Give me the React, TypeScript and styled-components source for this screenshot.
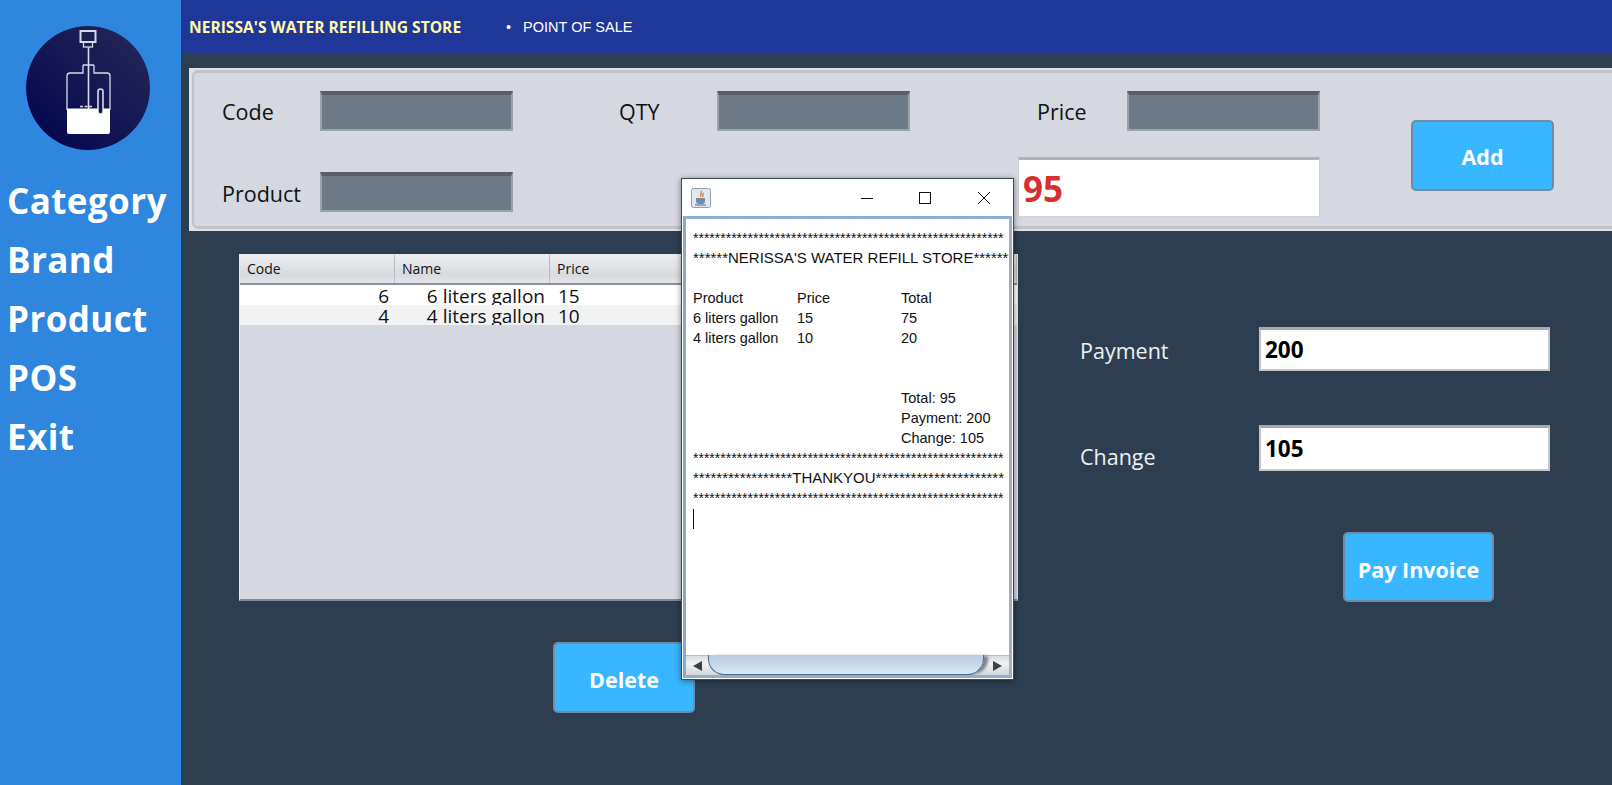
import React from "react";
import styled, { createGlobalStyle } from "styled-components";

const GlobalStyle = createGlobalStyle`
  html, body {
    margin: 0;
    padding: 0;
    height: 100%;
    overflow: hidden;
  }
  body {
    background: #2d3e50;
    font-family: "Open Sans", "Noto Sans", sans-serif;
  }
`;

const Page = styled.div`
  position: relative;
  display: flex;
  width: 1612px;
  height: 785px;
  overflow: hidden;
  background: #2d3e50;
`;

const Sidebar = styled.nav`
  width: 181px;
  flex-shrink: 0;
  background: #2e86de;
  padding: 26px 0 0 7px;
  box-sizing: border-box;
`;

const Logo = styled.svg`
  display: block;
  width: 124px;
  height: 124px;
  margin: 0 0 21px 19px;
`;

const NavItem = styled.div`
  height: 59px;
  line-height: 59px;
  color: #fff;
  font-size: 35px;
  font-weight: 700;
  letter-spacing: 0.4px;
`;

const Main = styled.div`
  flex: 1;
  min-width: 0;
`;

const TopBar = styled.header`
  height: 53px;
  display: flex;
  align-items: center;
  padding-left: 8px;
  background: #1e3799;
  color: #fff;
`;

const StoreName = styled.div`
  width: 317px;
  color: #fff8a8;
  font-size: 15.6px;
  font-weight: 700;
`;

const Crumb = styled.div`
  font-family: "Liberation Sans", Arial, sans-serif;
  font-size: 14.5px;

  &::before {
    content: "•";
    margin-right: 12px;
  }
`;

const FormFrame = styled.section`
  height: 163px;
  box-sizing: border-box;
  margin: 15px 0 0 8px;
  padding: 2px 0 2px 3px;
  background: #dfe1e5;
`;

const FormPanel = styled.div`
  display: grid;
  grid-template-columns: 98px 193px 204px 193px 217px 193px 91px 143px;
  grid-template-rows: 40px 40px;
  row-gap: 41px;
  align-items: center;
  height: 100%;
  box-sizing: border-box;
  padding: 18px 0 0 28px;
  background: #d5d8e0;
  border: 2px solid #bfc2c8;
  border-top-width: 3px;
  border-bottom-width: 3px;
  border-right: 0;
  border-radius: 6px 0 0 6px;
`;

const FieldLabel = styled.label<{ $left?: number; $drop?: number }>`
  color: #111;
  font-size: 21.5px;
  padding-left: ${({ $left }) => $left ?? 0}px;
  padding-top: ${({ $drop }) => $drop ?? 0}px;
`;

const DarkField = styled.div`
  height: 40px;
  box-sizing: border-box;
  background: #6d7a88;
  border: 2px solid #9ba2aa;
  border-top: 4px solid #565f6a;
`;

const TotalBox = styled.div`
  grid-column: 5 / 7;
  justify-self: end;
  align-self: end;
  width: 302px;
  height: 60px;
  margin-bottom: -5px;
  box-sizing: border-box;
  padding-left: 4px;
  background: #fff;
  border: 1px solid #d0d2d6;
  border-top: 3px solid #b0b2b6;
  color: #d63031;
  font-size: 35px;
  font-weight: 700;
  line-height: 58px;
`;

const BlueButton = styled.button<{ $w: number; $h: number }>`
  width: ${({ $w }) => $w}px;
  height: ${({ $h }) => $h}px;
  padding: 4px 0 0;
  background: #38b6ff;
  border: 2px solid #6f8ca3;
  border-radius: 5px;
  color: #fff;
  font-family: "Open Sans", sans-serif;
  font-size: 21.5px;
  font-weight: 700;
`;

const AddButton = styled(BlueButton)`
  grid-column: 8;
  grid-row: 1 / 3;
  margin-top: 7px;
  padding-top: 2px;
`;

const Content = styled.div`
  display: flex;
  align-items: flex-start;
  padding: 23px 0 0 58px;
`;

const LeftColumn = styled.div`
  width: 779px;
  flex-shrink: 0;
`;

const TableBox = styled.div`
  height: 347px;
  box-sizing: border-box;
  background: #d5d8e0;
  border: 1px solid #e6e8ec;
  border-bottom: 2px solid #7e8b98;
  overflow: hidden;
`;

const TableHead = styled.div`
  display: grid;
  grid-template-columns: 155px 155px 1fr;
  height: 28px;
  background: linear-gradient(#eeeff2, #d8dae0 70%, #e4e5e9);
  border-bottom: 2px solid #8a8f98;
`;

const HeadCell = styled.div`
  padding-left: 7px;
  border-right: 1px solid #b9bcc3;
  color: #111;
  font-size: 14px;
  line-height: 27px;
`;

const TableRow = styled.div<{ $alt?: boolean }>`
  display: grid;
  grid-template-columns: 149px 156px 1fr;
  height: 20px;
  overflow: hidden;
  background: ${({ $alt }) => ($alt ? "#f2f2f2" : "#fff")};
  color: #111;
  font-size: 19px;
  line-height: 23px;
`;

const NumCell = styled.div`
  text-align: right;
`;

const NameCell = styled.div`
  text-align: right;
`;

const PriceCell = styled.div`
  padding-left: 13px;
`;

const DeleteButton = styled(BlueButton)`
  display: block;
  margin: 41px 0 0 314px;
`;

const RightColumn = styled.div`
  display: grid;
  grid-template-columns: 179px 291px;
  grid-template-rows: 44px 46px;
  row-gap: 54px;
  align-items: center;
  padding: 73px 0 0 62px;
`;

const SideLabel = styled.label<{ $drop: number }>`
  color: #eef1f4;
  font-size: 21.5px;
  padding-top: ${({ $drop }) => $drop}px;
`;

const WhiteField = styled.div`
  height: 100%;
  box-sizing: border-box;
  padding-left: 4px;
  background: #fff;
  border: 2px solid #c4c6ca;
  border-top: 3px solid #a6a8ac;
  color: #000;
  font-size: 22.5px;
  font-weight: 700;
  display: flex;
  align-items: center;
`;

const PayButton = styled(BlueButton)`
  grid-column: 1 / 3;
  justify-self: start;
  margin: 7px 0 0 263px;
`;

/* the receipt window floats over the page */
const ReceiptWindow = styled.div`
  position: absolute;
  left: 681px;
  top: 178px;
  width: 333px;
  height: 502px;
  box-sizing: border-box;
  display: flex;
  flex-direction: column;
  background: #fff;
  border: 1px solid #3f4a56;
  box-shadow: 0 1px 6px rgba(0, 0, 0, 0.45);
`;

const TitleBar = styled.div`
  height: 37px;
  flex-shrink: 0;
  display: flex;
  align-items: center;
  padding-left: 9px;
`;

const JavaIcon = styled.svg`
  width: 20px;
  height: 20px;
`;

const WinButtons = styled.div`
  display: flex;
  margin-left: auto;
`;

const WinButton = styled.svg`
  width: 58px;
  height: 14px;
  fill: none;
  stroke: #111;
  stroke-width: 1;
`;

const ReceiptFrame = styled.div`
  flex: 1;
  min-height: 0;
  display: flex;
  flex-direction: column;
  margin: 0 1px 1px 1px;
  border: 3px solid #8fb0d4;
  border-right-color: #a3afbd;
  border-left-color: #8fa7c4;
`;

const ReceiptBody = styled.div`
  flex: 1;
  min-height: 0;
  overflow: hidden;
  padding: 9px 0 0 7px;
  color: #111;
  font-family: "Liberation Sans", Arial, sans-serif;
  font-size: 14.5px;
  line-height: 20px;
`;

const Line = styled.div`
  height: 20px;
  overflow: hidden;
  white-space: nowrap;
`;

const Stars = styled(Line)`
  font-size: 14px;
`;

const Banner = styled(Line)`
  font-size: 15px;
`;

const ReceiptRow = styled.div`
  display: grid;
  grid-template-columns: 104px 104px 1fr;
  height: 20px;
`;

const Caret = styled.div`
  width: 1px;
  height: 20px;
  margin-top: 1px;
  background: #111;
`;

const Blank = styled.div<{ $rows: number }>`
  height: ${({ $rows }) => $rows * 20}px;
`;

const TotalsLine = styled(Line)`
  padding-left: 208px;
`;

const ScrollBar = styled.div`
  flex-shrink: 0;
  height: 20px;
  display: flex;
  align-items: center;
  justify-content: space-between;
  position: relative;
  background: linear-gradient(#d9dbde, #f0f1f3 40%, #d4d6d9);
  border-top: 1px solid #b7bcc3;
  box-sizing: border-box;
  padding: 0 7px;
`;

const Thumb = styled.div`
  position: absolute;
  left: 22px;
  width: 276px;
  top: -1px;
  bottom: 0;
  box-sizing: border-box;
  background: linear-gradient(#b8cbe0, #c5d6e8 45%, #d9e8f4);
  border: 1px solid #4f6b86;
  border-top: 0;
  border-radius: 0 0 16px 16px;
  box-shadow: 5px 0 3px -1px #7d8087;
`;

const Arrow = styled.div<{ $right?: boolean }>`
  width: 0;
  height: 0;
  border-top: 5px solid transparent;
  border-bottom: 5px solid transparent;
  ${({ $right }) =>
    $right ? "border-left: 9px solid #3c3f44;" : "border-right: 9px solid #3c3f44;"}
`;

const stars = "*".repeat(57);

function App() {
  return (
    <>
      <GlobalStyle />
      <Page>
        <Sidebar>
          <Logo viewBox="0 0 124 124">
            <defs>
              <linearGradient id="lg" x1="0" y1="1" x2="1" y2="0">
                <stop offset="0" stopColor="#02034f" />
                <stop offset="1" stopColor="#262a58" />
              </linearGradient>
            </defs>
            <circle cx="62" cy="62" r="62" fill="url(#lg)" />
            <g fill="none" stroke="#d8dae6" strokeWidth="1.3">
              <rect x="54.5" y="5" width="15" height="11" strokeWidth="2" />
              <rect x="57.5" y="16" width="9" height="5" />
              <path d="M62.5 21V84" strokeWidth="1.6" />
              <path d="M57 39V47H44a3 3 0 0 0 -3 3V84M68 39V47H81a3 3 0 0 1 3 3V84M57 39H68" />
              <rect x="72" y="63" width="5" height="25" rx="2.5" strokeWidth="1.6" />
              <path d="M54 80.5H67" strokeDasharray="3 1.5" strokeWidth="1.6" />
            </g>
            <path d="M41 82.5H72V88H77V82.5H84V106a2 2 0 0 1 -2 2H43a2 2 0 0 1 -2 -2Z" fill="#fff" />
          </Logo>
          <NavItem>Category</NavItem>
          <NavItem>Brand</NavItem>
          <NavItem>Product</NavItem>
          <NavItem>POS</NavItem>
          <NavItem>Exit</NavItem>
        </Sidebar>
        <Main>
          <TopBar>
            <StoreName>NERISSA'S WATER REFILLING STORE</StoreName>
            <Crumb>POINT OF SALE</Crumb>
          </TopBar>
          <FormFrame>
            <FormPanel>
              <FieldLabel>Code</FieldLabel>
              <DarkField />
              <FieldLabel $left={106}>QTY</FieldLabel>
              <DarkField />
              <FieldLabel $left={127}>Price</FieldLabel>
              <DarkField />
              <span />
              <AddButton $w={143} $h={71}>
                Add
              </AddButton>
              <FieldLabel $drop={2}>Product</FieldLabel>
              <DarkField />
              <TotalBox>95</TotalBox>
            </FormPanel>
          </FormFrame>
          <Content>
            <LeftColumn>
              <TableBox>
                <TableHead>
                  <HeadCell>Code</HeadCell>
                  <HeadCell>Name</HeadCell>
                  <HeadCell>Price</HeadCell>
                </TableHead>
                <TableRow>
                  <NumCell>6</NumCell>
                  <NameCell>6 liters gallon</NameCell>
                  <PriceCell>15</PriceCell>
                </TableRow>
                <TableRow $alt>
                  <NumCell>4</NumCell>
                  <NameCell>4 liters gallon</NameCell>
                  <PriceCell>10</PriceCell>
                </TableRow>
              </TableBox>
              <DeleteButton $w={142} $h={71}>
                Delete
              </DeleteButton>
            </LeftColumn>
            <RightColumn>
              <SideLabel $drop={2}>Payment</SideLabel>
              <WhiteField>200</WhiteField>
              <SideLabel $drop={16}>Change</SideLabel>
              <WhiteField>105</WhiteField>
              <PayButton $w={151} $h={70}>
                Pay Invoice
              </PayButton>
            </RightColumn>
          </Content>
        </Main>
        <ReceiptWindow>
          <TitleBar>
            <JavaIcon viewBox="0 0 20 20">
              <rect x="0.5" y="0.5" width="19" height="19" rx="2" fill="#e3e8ee" stroke="#8ea0b4" />
              <path d="M10 3c2 2-2 3 0 6M12 5c1 1-1 2 0 4" fill="none" stroke="#e07b2a" strokeWidth="1.4" />
              <path d="M5 10h9v3a3 3 0 0 1-3 3H8a3 3 0 0 1-3-3Z" fill="#6d8cab" />
              <path d="M4 17h11" stroke="#49698a" />
            </JavaIcon>
            <WinButtons>
              <WinButton viewBox="0 0 58 14">
                <path d="M22 7.5H34" />
              </WinButton>
              <WinButton viewBox="0 0 58 14">
                <rect x="22.5" y="1.5" width="11" height="11" />
              </WinButton>
              <WinButton viewBox="0 0 58 14">
                <path d="M23 1L35 13M35 1L23 13" />
              </WinButton>
            </WinButtons>
          </TitleBar>
          <ReceiptFrame>
            <ReceiptBody>
              <Stars>{stars}</Stars>
              <Banner>******NERISSA'S WATER REFILL STORE******</Banner>
              <Blank $rows={1} />
              <ReceiptRow>
                <span>Product</span>
                <span>Price</span>
                <span>Total</span>
              </ReceiptRow>
              <ReceiptRow>
                <span>6 liters gallon</span>
                <span>15</span>
                <span>75</span>
              </ReceiptRow>
              <ReceiptRow>
                <span>4 liters gallon</span>
                <span>10</span>
                <span>20</span>
              </ReceiptRow>
              <Blank $rows={2} />
              <TotalsLine>Total: 95</TotalsLine>
              <TotalsLine>Payment: 200</TotalsLine>
              <TotalsLine>Change: 105</TotalsLine>
              <Stars>{stars}</Stars>
              <Banner>*****************THANKYOU**********************</Banner>
              <Stars>{stars}</Stars>
              <Caret />
            </ReceiptBody>
            <ScrollBar>
              <Arrow />
              <Thumb />
              <Arrow $right />
            </ScrollBar>
          </ReceiptFrame>
        </ReceiptWindow>
      </Page>
    </>
  );
}

export default App;
